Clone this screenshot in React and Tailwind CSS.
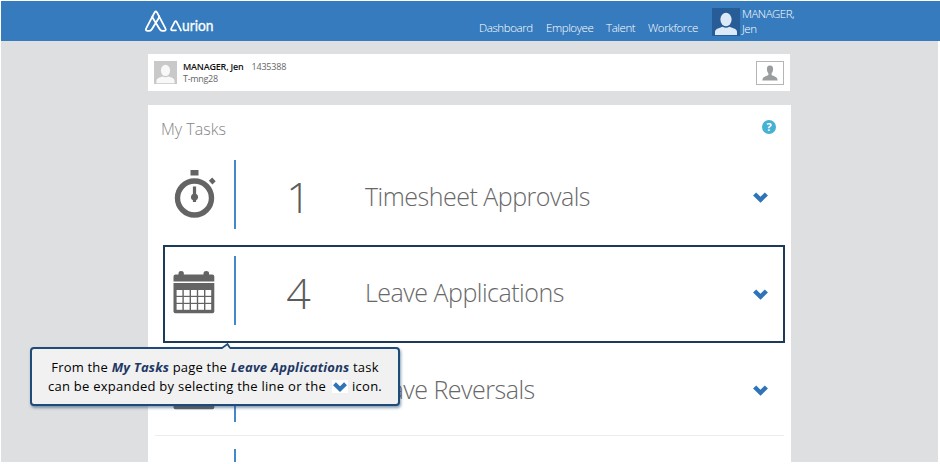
import React from "react";

function Chevron({ className }) {
  return (
    <svg viewBox="0 0 14 10" className={className} fill="none">
      <path d="M1.5 1.7 L7 7.1 L12.5 1.7" stroke="#2f73b8" strokeWidth="4.1" />
    </svg>
  );
}

function Logo() {
  return (
    <svg width="72" height="24" viewBox="0 0 72 24" fill="none" stroke="#fff">
      <g strokeWidth="1.8" strokeLinejoin="round" strokeLinecap="round">
        <path d="M7.6 6.2 L9.6 2.4 Q10.8 0.6 12 2.4 L20.4 18.4 Q21.5 20.8 18.8 20.8 H17.2 Q15.6 20.8 14.6 19 L7.8 8 Q7.2 7 7.6 6.2" />
        <path d="M14 6.2 Q14.4 7 13.8 8 L7 19 Q6 20.8 4.4 20.8 H2.8 Q0.1 20.8 1.2 18.4 L7.6 6.2" />
      </g>
      <path d="M31 20.3 H27.4 Q25.4 20.2 26.3 18.4 L29.8 11.8 Q30.7 10.4 31.6 11.8 L36 20.5" strokeWidth="1.7" strokeLinecap="round" />
      <text x="37" y="21" fill="#fff" stroke="#fff" strokeWidth="0.3" fontFamily="Lato, sans-serif" fontSize="15" textLength="31.5" lengthAdjust="spacingAndGlyphs">urion</text>
    </svg>
  );
}

function Avatar({ className, back, front }) {
  return (
    <svg viewBox="0 0 28 28" className={className}>
      <rect width="28" height="28" fill={back} />
      <ellipse cx="14" cy="11.5" rx="5.6" ry="6.8" fill={front} />
      <path d="M3 27 V24 Q3 21.5 6 20.5 L10.5 18.8 Q14 20.6 17.5 18.8 L22 20.5 Q25 21.5 25 24 V27 Z" fill={front} />
    </svg>
  );
}

function Stopwatch() {
  return (
    <svg width="44" height="50" viewBox="0 0 44 50" fill="#646464">
      <rect x="18.5" y="0" width="8" height="5.5" />
      <rect x="-2.5" y="-2.3" width="5" height="4.6" transform="translate(40.3 11) rotate(45)" />
      <circle cx="22.5" cy="28" r="17" fill="none" stroke="#646464" strokeWidth="5.4" />
      <path transform="translate(0.5 -1)" d="M20.4 17.5 H23.6 V24.8 Q25.8 26 25.6 28.5 Q25.2 30.5 23.6 31.2 V33 H20.4 V31.2 Q18.6 30.5 18.4 28.5 Q18.4 26 20.4 24.8 Z" />
    </svg>
  );
}

function Calendar() {
  return (
    <svg width="42" height="44" viewBox="0 0 42 44" fill="#646464">
      <path d="M0.5 11.5 V6.5 Q0.5 4.5 2.5 4.5 H5.5 V3 Q5.5 1 8 1 Q10.8 1 10.8 3 V4.5 H30.5 V3 Q30.5 1 33.2 1 Q36 1 36 3 V4.5 H39.3 Q41.3 4.5 41.3 6.5 V11.5 Z" />
      <path d="M0.5 13 H41.3 V41.5 Q41.3 43.2 39.5 43.2 H2.3 Q0.5 43.2 0.5 41.5 Z" />
      {[20, 27, 34].map((y) =>
        [3.6, 10.8, 18, 25.2, 32.4].map((x) => (
          <rect key={x + "-" + y} x={x} y={y} width="5.8" height="5.8" fill="#fff" />
        ))
      )}
    </svg>
  );
}

function TaskRow({ icon, count, label, border }) {
  return (
    <div className={`mx-[7px] h-[96.5px] shrink-0 flex items-start pt-[13.5px] ${border ? "border-b border-[#ededed]" : ""}`}>
      <div className="w-[79px] h-[69px] flex items-center justify-center pr-[2px] pt-[2px]">{icon}</div>
      <div className="w-[2px] h-[69px] bg-[#4488c8]" />
      <div className="w-[126px] h-[69px] flex items-center justify-center text-[43px] leading-none font-light text-[#5c5c5c] pt-[4px] pr-[1px]">{count}</div>
      <div className="h-[69px] flex-1 flex items-center text-[25px] leading-none tracking-[-0.5px] font-light text-[#686868] pl-[3px] pt-[4px] whitespace-nowrap">{label}</div>
      <div className="h-[69px] w-[30px] mr-[9px] flex items-center justify-center pt-[7px]">
        {label && <Chevron className="w-[15px] h-[11px]" />}
      </div>
    </div>
  );
}

export default function App() {
  return (
    <div className="relative w-[940px] h-[464px] overflow-hidden bg-white pt-px pl-px font-['Open_Sans',sans-serif]">
      <header className="h-10 w-full bg-[#367bbd] flex items-start">
        <div className="pl-[144px] pt-[9px] w-[478px]"><Logo /></div>
        <nav className="flex pt-[19px] gap-[14px] text-[11.5px] leading-4 tracking-[-0.4px] font-light text-white whitespace-nowrap">
          <span className="w-[53px]">Dashboard</span>
          <span className="w-[46px]">Employee</span>
          <span className="w-[28px]">Talent</span>
          <span className="w-[51px]">Workforce</span>
        </nav>
        <div className="flex pl-[13px] pt-[7px]">
          <Avatar className="w-7 h-7" back="#285c97" front="#dce9f7" />
          <div className="pl-[2px] -mt-[2px] text-[11.5px] leading-[15px] tracking-[-0.5px] font-light text-white">MANAGER,<br />Jen</div>
        </div>
      </header>

      <main className="h-[421px] w-[937px] bg-[#dedfe1] pl-[147px] pt-[13px] overflow-hidden">
        <section className="w-[642px] h-[37px] bg-white flex items-center px-[6px]">
          <Avatar className="w-[23px] h-[23px]" back="#c9c9c9" front="#f8f8f8" />
          <div className="pl-[6px] flex-1 text-[9px] leading-[12px] text-[#666] whitespace-nowrap">
            <div><b className="font-semibold tracking-[-0.2px] text-[#111]">MANAGER, Jen</b><span className="pl-2 tracking-[-0.2px]">1435388</span></div>
            <div className="tracking-[-0.3px]">T-mng28</div>
          </div>
          <div className="w-7 h-6 border border-[#b5b5b5] flex items-center justify-center">
            <svg width="16" height="16" viewBox="0 0 16 16" fill="#999da0">
              <path d="M8 0.5 C10.6 0.5 11.4 2.4 11 5 C10.8 6.8 10 7.8 9.6 8.4 V10 C11.5 11.2 15.5 11.5 15.7 15.5 H0.3 C0.5 11.5 4.5 11.2 6.4 10 V8.4 C6 7.8 5.2 6.8 5 5 C4.6 2.4 5.4 0.5 8 0.5 Z" />
            </svg>
          </div>
        </section>

        <section className="mt-[14px] w-[643px] h-[370px] bg-white flex flex-col">
          <div className="h-[41.2px] shrink-0 flex justify-between pl-[13px] pr-[15px] pt-[15px]">
            <h1 className="-mt-px text-[16px] leading-[20px] font-light text-[#858585]">My Tasks</h1>
            <div className="w-[14px] h-[14px] rounded-full bg-[#46b1d3] text-white text-[11px] leading-[14px] font-bold text-center">?</div>
          </div>
          <TaskRow icon={<Stopwatch />} count="1" label="Timesheet Approvals" />
          <TaskRow icon={<Calendar />} count="4" label="Leave Applications" />
          <TaskRow icon={<Calendar />} label="Leave Reversals" border />
          <TaskRow />
        </section>
      </main>

      <div className="absolute left-[163px] top-[245px] w-[622px] h-[98px] border-2 border-[#1b3b58]" />

      <div className="absolute left-[30px] top-[347px] w-[370px] h-[59px] rounded-[4px] border-2 border-[#1f4b78] bg-[#f1f1f1] shadow-[1px_2px_3px_rgba(40,80,120,0.55)] pt-[9px] text-center text-[13px] leading-[19px] text-black whitespace-nowrap">
        <svg className="absolute left-[190px] -top-[6px]" width="12" height="8" viewBox="0 0 12 8">
          <path d="M0 6 L5.5 0.5 L8 6 V8 H0 Z" fill="#f1f1f1" />
          <path d="M0 5 L5.5 1 L8 5" fill="none" stroke="#1f4b78" strokeWidth="1.7" />
        </svg>
        <div className="tracking-[0.2px]">From the <b className="italic text-[#1f3864]">My Tasks</b> page the <b className="italic text-[#1f3864]">Leave Applications</b> task</div>
        <div className="flex justify-center items-center tracking-[0.26px]">
          can be expanded by selecting the line or the
          <span className="ml-[6px] mr-[4px] w-[16px] h-[13px] bg-white flex items-center justify-center"><Chevron className="w-[14px] h-[10px]" /></span>
          icon.
        </div>
      </div>
    </div>
  );
}
